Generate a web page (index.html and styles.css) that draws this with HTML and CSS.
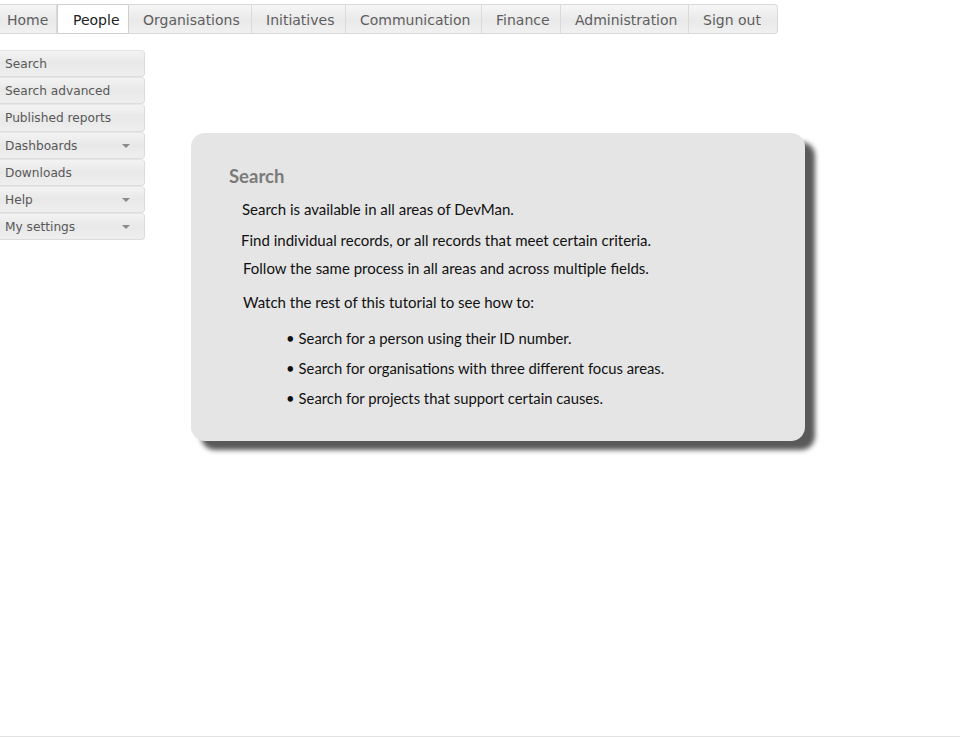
FILE: index.html
```html
<!DOCTYPE html>
<html>
<head>
<meta charset="utf-8">
<link rel="stylesheet" href="styles.css">
</head>
<body>
<nav class="topnav">
  <a class="tab">Home</a>
  <a class="tab active">People</a>
  <a class="tab">Organisations</a>
  <a class="tab">Initiatives</a>
  <a class="tab">Communication</a>
  <a class="tab">Finance</a>
  <a class="tab">Administration</a>
  <a class="tab last">Sign out</a>
</nav>
<div class="layout">
  <ul class="sidemenu">
    <li class="item">Search</li>
    <li class="item">Search advanced</li>
    <li class="item">Published reports</li>
    <li class="item">Dashboards<span class="caret"></span></li>
    <li class="item">Downloads</li>
    <li class="item">Help<span class="caret"></span></li>
    <li class="item">My settings<span class="caret"></span></li>
  </ul>
  <section class="card">
    <h2 class="card-title">Search</h2>
    <p class="line l1">Search is available in all areas of DevMan.</p>
    <p class="line l2">Find individual records, or all records that meet certain criteria.</p>
    <p class="line l3">Follow the same process in all areas and across multiple fields.</p>
    <p class="line l4">Watch the rest of this tutorial to see how to:</p>
    <ul class="bullets">
      <li>Search for a person using their ID number.</li>
      <li>Search for organisations with three different focus areas.</li>
      <li>Search for projects that support certain causes.</li>
    </ul>
  </section>
</div>
<div class="bottomline"></div>
</body>
</html>
```
FILE: styles.css
```css
html, body {
  margin: 0;
  padding: 0;
  background: #ffffff;
  height: 737px;
  overflow: hidden;
}
body {
  font-family: "DejaVu Sans", Verdana, sans-serif;
  position: relative;
}
.topnav {
  display: flex;
  margin-top: 4px;
  width: 778px;
  height: 30px;
  box-sizing: border-box;
  border: 1px solid #d9d9d9;
  border-left: none;
  border-radius: 0 4px 4px 0;
  background: linear-gradient(#f6f6f6, #e9e9e9 55%, #f1f1f1);
}
.tab {
  display: flex;
  align-items: center;
  padding: 1px 0 0 7px;
  box-sizing: border-box;
  font-size: 14px;
  color: #5e5e5e;
  border-right: 1px solid #dadada;
  white-space: nowrap;
}
.tab:nth-child(1) { width: 57px; }
.tab:nth-child(2) { width: 72px; padding-left: 15px; }
.tab:nth-child(3) { width: 123px; padding-left: 14px; }
.tab:nth-child(4) { width: 94px; padding-left: 14px; }
.tab:nth-child(5) { width: 136px; padding-left: 14px; }
.tab:nth-child(6) { width: 79px; padding-left: 14px; }
.tab:nth-child(7) { width: 128px; padding-left: 14px; }
.tab:nth-child(8) { width: 88px; padding-left: 14px; border-right: none; }
.tab.active {
  background: #ffffff;
  color: #222;
  border: 1px solid #cfcfcf;
  margin-top: -1px;
  height: 30px;
  border-radius: 2px 2px 0 0;
}
.layout {
  display: flex;
  align-items: flex-start;
  margin-top: 15px;
}
.sidemenu {
  list-style: none;
  margin: 1px 0 0 0;
  padding: 0;
  width: 145px;
  flex: none;
}
.item {
  position: relative;
  height: 27.2px;
  box-sizing: border-box;
  padding-left: 5px;
  padding-top: 1px;
  display: flex;
  align-items: center;
  font-size: 12.2px;
  color: #585858;
  border: 1px solid #dcdcdc;
  border-left: none;
  border-top-color: #e6e6e6;
  border-radius: 0 4px 4px 0;
  background: linear-gradient(#f3f3f3, #e8e8e8 50%, #efefef);
  white-space: nowrap;
}
.caret {
  position: absolute;
  left: 122px;
  top: 11px;
  width: 0;
  height: 0;
  border-left: 4px solid transparent;
  border-right: 4px solid transparent;
  border-top: 4px solid #8a8a8a;
}
.card {
  margin: 84px 0 0 46px;
  width: 614px;
  height: 308px;
  box-sizing: border-box;
  background: #e5e5e5;
  border-radius: 14px;
  box-shadow: 10px 9px 5px rgba(60, 60, 60, 0.85);
  padding: 31px 0 0 38px;
  font-family: Lato, "Open Sans", sans-serif;
  color: #111;
}
.card-title {
  margin: 0;
  font-size: 18.5px;
  font-weight: bold;
  color: #7a7a7a;
  line-height: 24px;
}
.line {
  margin: 0;
  font-size: 15px;
  line-height: 18px;
}
.l1 { margin: 12px 0 0 13px; }
.l2 { margin: 13px 0 0 12px; }
.l3 { margin: 10px 0 0 14px; }
.l4 { margin: 16px 0 0 14px; }
.bullets {
  list-style: none;
  margin: 18px 0 0 57px;
  padding: 0;
  font-size: 14.8px;
  line-height: 18px;
}
.bullets li {
  margin-bottom: 12px;
}
.bullets li::before {
  content: "•";
  margin-right: 4px;
}
.bottomline {
  position: absolute;
  left: 0;
  right: 0;
  top: 736px;
  height: 1px;
  background: #e2e2e2;
}
```
